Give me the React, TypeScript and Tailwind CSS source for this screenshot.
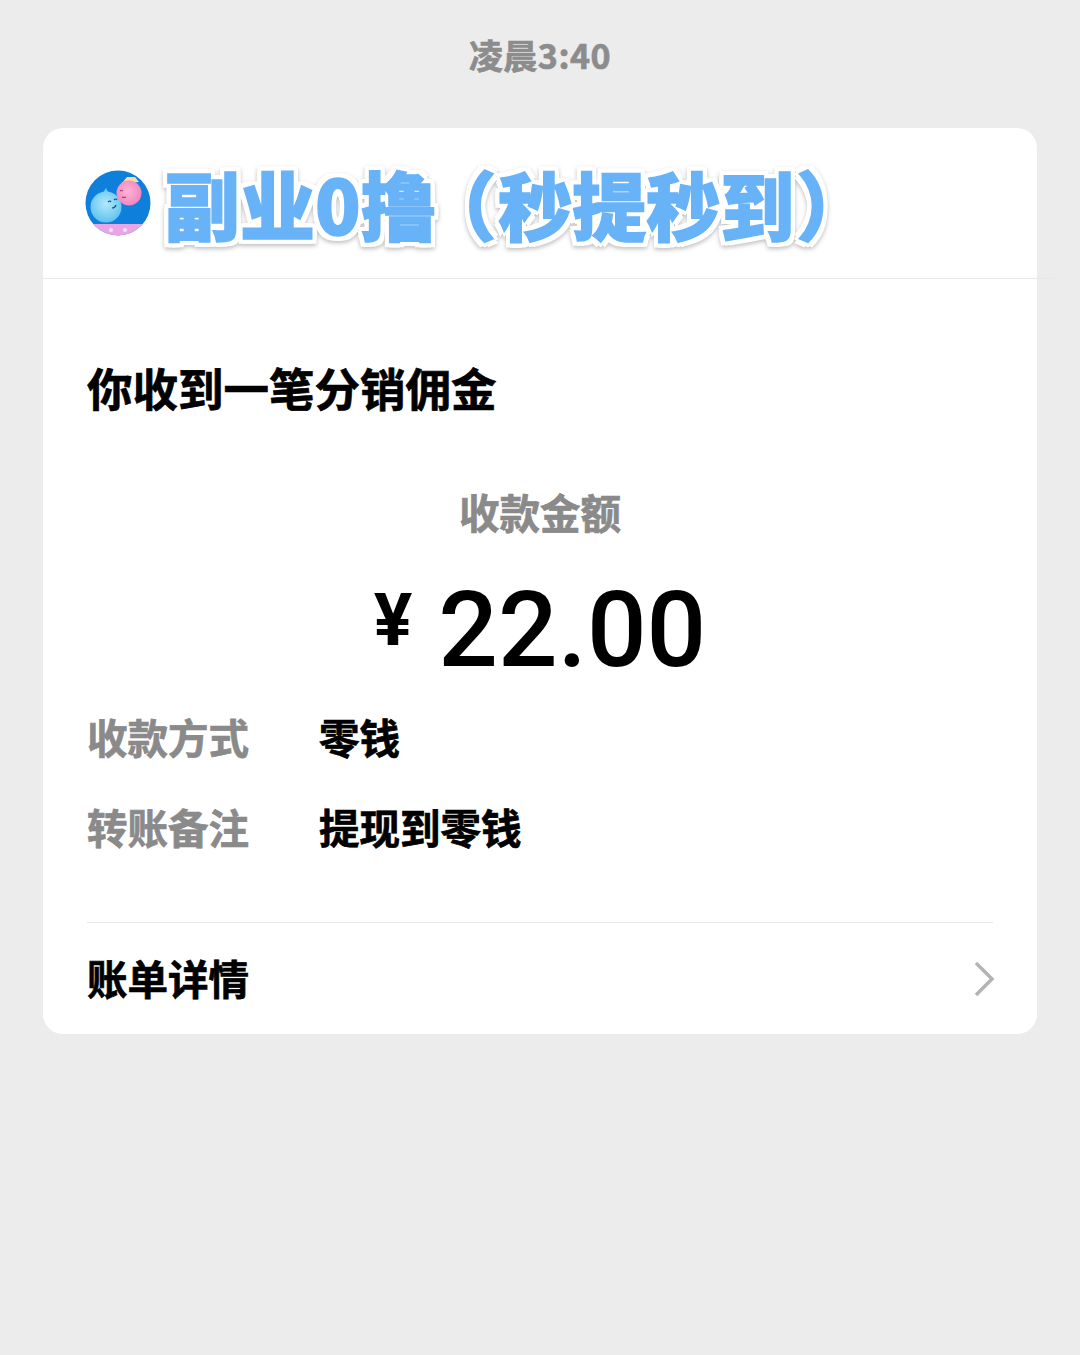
const cjk = "font-['Noto_Sans_CJK_SC',sans-serif]";
const heavy = "[-webkit-text-stroke:0.7px_currentColor]";

function Logo() {
  return (
    <svg width="66" height="66" viewBox="0 0 66 66" className="shrink-0 mt-[1px]">
      <defs>
        <radialGradient id="blue" cx="0.5" cy="0.4" r="0.7">
          <stop offset="0" stopColor="#b4e8fb" />
          <stop offset="1" stopColor="#4fbcee" />
        </radialGradient>
        <radialGradient id="pink" cx="0.45" cy="0.45" r="0.65">
          <stop offset="0" stopColor="#fdb4d6" />
          <stop offset="1" stopColor="#f17fbb" />
        </radialGradient>
        <clipPath id="disc">
          <circle cx="33" cy="33" r="32.5" />
        </clipPath>
      </defs>
      <g clipPath="url(#disc)">
        <rect width="66" height="66" fill="#0f7fdc" />
        <rect y="54" width="66" height="12" fill="#e9a6e6" />
      </g>
      <path d="M21 18 L24 24 L16 26 Z" fill="#6cc8f2" />
      <circle cx="21" cy="37" r="15.5" fill="url(#blue)" />
      <path d="M37 13 L42 7 L50 7 L54 12 Z" fill="#f9d9a8" />
      <circle cx="44" cy="23" r="12.5" fill="url(#pink)" />
      <path d="M23 32 q2 -2 3 0 M29 30 q2 -2 3 0 M27 38 q3 0 4 -3" stroke="#14527f" strokeWidth="1.2" fill="none" />
      <path d="M35 21 q1.5 -1.5 3 0 M37 27 q2 1 4 0" stroke="#a83a78" strokeWidth="1.1" fill="none" />
      <circle cx="26" cy="60" r="2" fill="#f7e2f6" />
      <circle cx="40" cy="60" r="2" fill="#f7e2f6" />
    </svg>
  );
}

function InfoRow({ label, value }: { label: string; value: string }) {
  return (
    <div className={`flex items-center h-[40px] text-[40.5px] font-bold leading-none ${heavy}`}>
      <span className="w-[232px] text-[#8a8a8a]">{label}</span>
      <span className="text-black">{value}</span>
    </div>
  );
}

export default function App() {
  return (
    <div className={`w-[1080px] h-[1355px] bg-[#ececec] overflow-hidden flex flex-col ${cjk}`}>
      <div className={`h-[128px] pt-[35px] text-center text-[34px] leading-[40px] font-bold text-[#8c8c8c] tracking-[0.5px] ${heavy}`}>
        凌晨3:40
      </div>

      <div className="ml-[43px] w-[994px] h-[906px] bg-white rounded-[20px] flex flex-col">
        <div className="h-[151px] border-b border-[#e8e8e8] mr-[-18px] pl-[42px] pt-[41px] flex items-start gap-[14px]">
          <Logo />
          <div className="mt-[-7px] text-[75px] leading-[82px] font-black whitespace-nowrap text-[#68b2f8] [-webkit-text-stroke:1.5px_#68b2f8] [filter:drop-shadow(4px_0_0_white)_drop-shadow(-4px_0_0_white)_drop-shadow(0_4px_0_white)_drop-shadow(0_-4px_0_white)_drop-shadow(0_2px_2px_rgba(0,0,0,0.25))]">
            副业0撸<span className="ml-[20px] [font-feature-settings:'palt']">（</span><span className="ml-[5px] text-[74px]">秒提秒到</span><span className="ml-[5px] [font-feature-settings:'palt']">）</span>
          </div>
        </div>

        <div className="px-[44px] flex flex-col flex-1">
          <div className={`mt-[83px] text-[45.5px] leading-[50px] font-bold text-black ${heavy}`}>你收到一笔分销佣金</div>

          <div className={`mt-[75px] text-center text-[40.5px] leading-[50px] font-bold text-[#8a8a8a] ${heavy}`}>收款金额</div>

          <div className="mt-[34px] h-[120px] flex justify-center items-start gap-[26px]">
            <span className="font-['Roboto',sans-serif] text-[72px] leading-[100px] font-bold text-black">¥</span>
            <span className="font-['Roboto',sans-serif] text-[105px] leading-[120px] font-medium text-black">22.00</span>
          </div>

          <div className="mt-[26px] flex flex-col gap-[50px]">
            <InfoRow label="收款方式" value="零钱" />
            <InfoRow label="转账备注" value="提现到零钱" />
          </div>

          <div className="mt-[75px] border-t border-[#e8e8e8] flex-1 flex items-center justify-between">
            <span className={`text-[40.5px] font-bold text-black ${heavy}`}>账单详情</span>
            <svg width="22" height="38" viewBox="0 0 22 38" fill="none" className="mr-[-2px]">
              <path d="M3 3 L19 19 L3 35" stroke="#b4b4b4" strokeWidth="3.5" />
            </svg>
          </div>
        </div>
      </div>
    </div>
  );
}
